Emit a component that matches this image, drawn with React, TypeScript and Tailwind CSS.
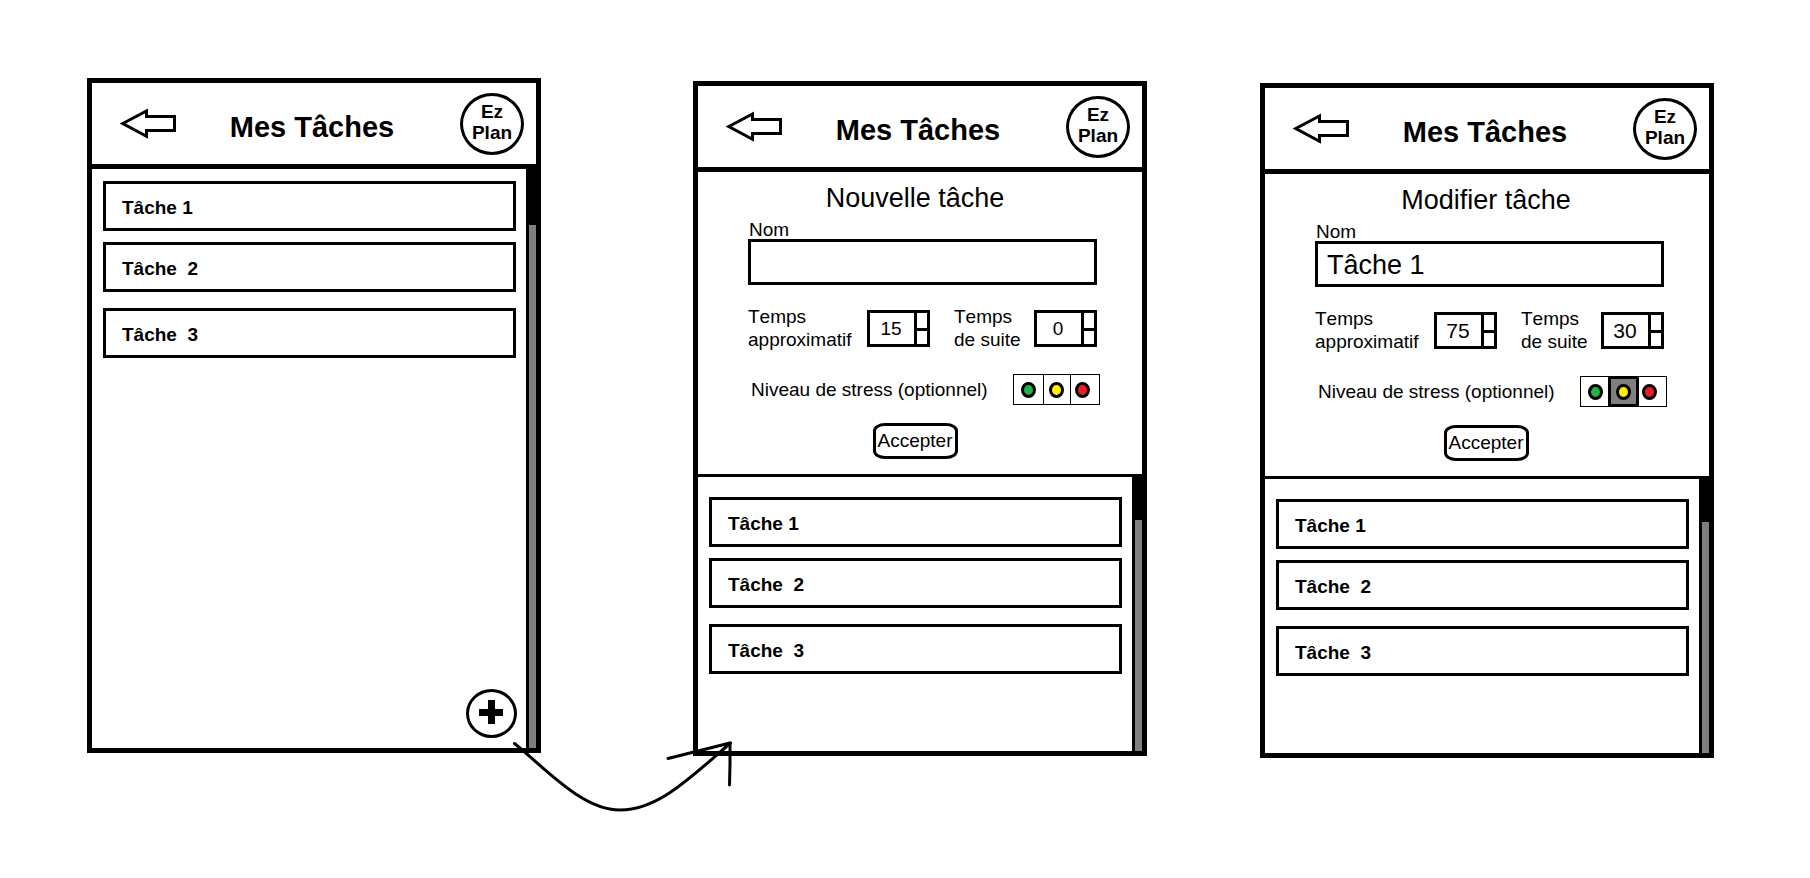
import { useState } from "react";
import type { ReactNode } from "react";

const TASKS = ["Tâche 1", "Tâche \u00a02", "Tâche \u00a03"];

const LEVELS = [
  { name: "Faible", color: "bg-[#22b14c]", cell: "w-[29px]" },
  { name: "Moyen", color: "bg-[#fff200]", cell: "w-[27px] border-l pr-0.5" },
  { name: "Élevé", color: "bg-[#ed1c24]", cell: "w-[29px] border-l pr-1.5" },
];

function Header() {
  return (
    <header className="flex h-[86px] items-center border-b-5 border-black pr-3 pl-7">
      <button type="button" aria-label="Retour" className="shrink-0">
        <svg width="56" height="31" viewBox="0 0 56 31" fill="none" stroke="black" strokeWidth="3" strokeMiterlimit="10">
          <path d="M2.800 15.500 26.500 3V8.500H54.500V22.500H26.500V28.200Z" />
        </svg>
      </button>
      <h1 className="flex-1 pt-1.5 pr-3 text-center text-[29px] leading-9 font-bold">Mes Tâches</h1>
      <div className="flex h-[62px] w-16 shrink-0 flex-col justify-center rounded-[50%] border-3 border-black pb-1 text-center text-[19px] leading-[21px] font-bold">
        <span>Ez</span>
        <span>Plan</span>
      </div>
    </header>
  );
}

function TaskList({ spacing, thumb, children }: { spacing: string; thumb: string; children?: ReactNode }) {
  return (
    <section className="relative flex flex-1">
      <ul className={`flex-1 pr-2.5 pl-[11px] ${spacing}`}>
        {TASKS.map((task) => (
          <li key={task} className="mb-[11px] last:mt-4">
            <button
              type="button"
              className="flex h-[50px] w-full items-center border-3 border-black pt-1 pl-4 text-left text-[19px] leading-[22px] font-bold"
            >
              {task}
            </button>
          </li>
        ))}
      </ul>
      <div className="w-2.5 border-l-3 border-black bg-[#7f7f7f]">
        <div className={`bg-black ${thumb}`} />
      </div>
      {children}
    </section>
  );
}

function Stepper({ id, initial, size }: { id: string; initial: number; size: string }) {
  const [value, setValue] = useState(initial);
  return (
    <div className="flex h-[37px] w-[63px] shrink-0 border-3 border-black">
      <input
        id={id}
        type="text"
        inputMode="numeric"
        value={value}
        onChange={(e) => setValue(Number(e.target.value) || 0)}
        className={`w-0 min-w-0 flex-1 bg-transparent pr-0.5 text-center outline-none ${size}`}
      />
      <div className="flex w-[13px] flex-col border-l-3 border-black">
        <button type="button" aria-label="Augmenter" className="flex-1 border-b-3 border-black" onClick={() => setValue(value + 1)} />
        <button type="button" aria-label="Diminuer" className="h-[13px]" onClick={() => setValue(value - 1)} />
      </div>
    </div>
  );
}

function StressPicker({ id, initial }: { id: string; initial: string | null }) {
  const [level, setLevel] = useState(initial);
  return (
    <div role="radiogroup" aria-labelledby={`${id}-stress`} className="flex h-[31px] shrink-0 border border-black">
      {LEVELS.map(({ name, color, cell }) => (
        <label
          key={name}
          className={`relative flex items-center justify-center border-black ${level === name ? "z-10" : ""} ${cell}`}
        >
          {level === name && (
            <span className="absolute -inset-y-px -right-0.5 -left-[3px] border-3 border-black bg-[#7f7f7f]" />
          )}
          <input
            type="radio"
            name={`${id}-stress`}
            aria-label={name}
            checked={level === name}
            onChange={() => setLevel(name)}
            className={`relative h-4 w-[15px] shrink-0 appearance-none rounded-[50%] border-3 border-black ${color}`}
          />
        </label>
      ))}
    </div>
  );
}

type FormProps = {
  id: string;
  title: string;
  name: string;
  total: number;
  streak: number;
  stress: string | null;
  digits: string;
  align: string;
};

function TaskForm({ id, title, name, total, streak, stress, digits, align }: FormProps) {
  return (
    <form
      className="flex h-[305px] flex-col border-b-3 border-black pt-2 text-[19px]"
      onSubmit={(e) => e.preventDefault()}
    >
      <h2 className={`text-center text-[27px] leading-9 ${align}`}>{title}</h2>
      <div className="mt-1 flex flex-col pr-[45px] pl-[50px]">
        <label htmlFor={`${id}-name`} className="pl-px leading-[19px]">
          Nom
        </label>
        <input
          id={`${id}-name`}
          type="text"
          defaultValue={name}
          className="h-[46px] w-full border-3 border-black pt-0.5 pl-[9px] text-[27px] outline-none"
        />
        <div className="mt-5 flex items-center leading-[23px]">
          <label htmlFor={`${id}-total`} className="flex-1">
            Temps
            <br />
            approximatif
          </label>
          <Stepper id={`${id}-total`} initial={total} size={digits} />
          <label htmlFor={`${id}-streak`} className="ml-6 w-20">
            Temps
            <br />
            de suite
          </label>
          <Stepper id={`${id}-streak`} initial={streak} size={digits} />
        </div>
        <div className="mt-[23px] -mr-[3px] flex items-center justify-between pl-[3px]">
          <span id={`${id}-stress`} className="leading-[22px] whitespace-nowrap">
            Niveau de stress (optionnel)
          </span>
          <StressPicker id={id} initial={stress} />
        </div>
      </div>
      <div className={`mt-[18px] flex justify-center ${align}`}>
        <button type="submit" className="h-9 w-[85px] rounded-[12px/8px] border-3 border-black text-center leading-[22px]">
          Accepter
        </button>
      </div>
    </form>
  );
}

function Screen({ className, children }: { className: string; children: ReactNode }) {
  return (
    <article className={`relative flex min-h-[675px] flex-1 flex-col border-5 border-black bg-white ${className}`}>
      <Header />
      {children}
    </article>
  );
}

export default function App() {
  return (
    <main className="flex min-h-screen items-start bg-white pt-[78px] pr-24 pl-[87px] font-['Liberation_Sans',Arial,sans-serif] text-black [font-kerning:none]">
      <Screen className="z-10 mr-[152px]">
        <TaskList spacing="pt-3" thumb="h-14">
          <button
            type="button"
            aria-label="Ajouter une tâche"
            className="absolute right-[19px] bottom-2.5 flex h-[49px] w-[51px] items-center justify-center rounded-[50%] border-3 border-black bg-white pr-px pb-1"
          >
            <svg width="24" height="24" viewBox="0 0 24 24" fill="black">
              <path d="M9 0h7v9h8v7h-8v8H9v-8H0V9h9z" />
            </svg>
          </button>
        </TaskList>
        <svg
          className="pointer-events-none absolute top-full left-full -mt-3 -ml-7"
          width="240"
          height="80"
          viewBox="508 736 240 80"
          fill="none"
          stroke="black"
          strokeWidth="3"
          strokeLinecap="round"
          strokeLinejoin="round"
        >
          <path d="M514.500 743.500C545 768 582 810 620 810S690 778 730.500 743" />
          <path d="M668 758.500 730 743V764L729.500 785" />
        </svg>
      </Screen>

      <Screen className="mt-[3px] mr-[113px]">
        <TaskForm id="new" title="Nouvelle tâche" name="" total={15} streak={0} stress={null} digits="text-[19px]" align="pr-2.5" />
        <TaskList spacing="pt-5" thumb="h-[43px]" />
      </Screen>

      <Screen className="mt-[5px]">
        <TaskForm id="edit" title="Modifier tâche" name="Tâche 1" total={75} streak={30} stress="Moyen" digits="text-[21px]" align="pr-0.5" />
        <TaskList spacing="pt-5" thumb="h-[43px]" />
      </Screen>
    </main>
  );
}
